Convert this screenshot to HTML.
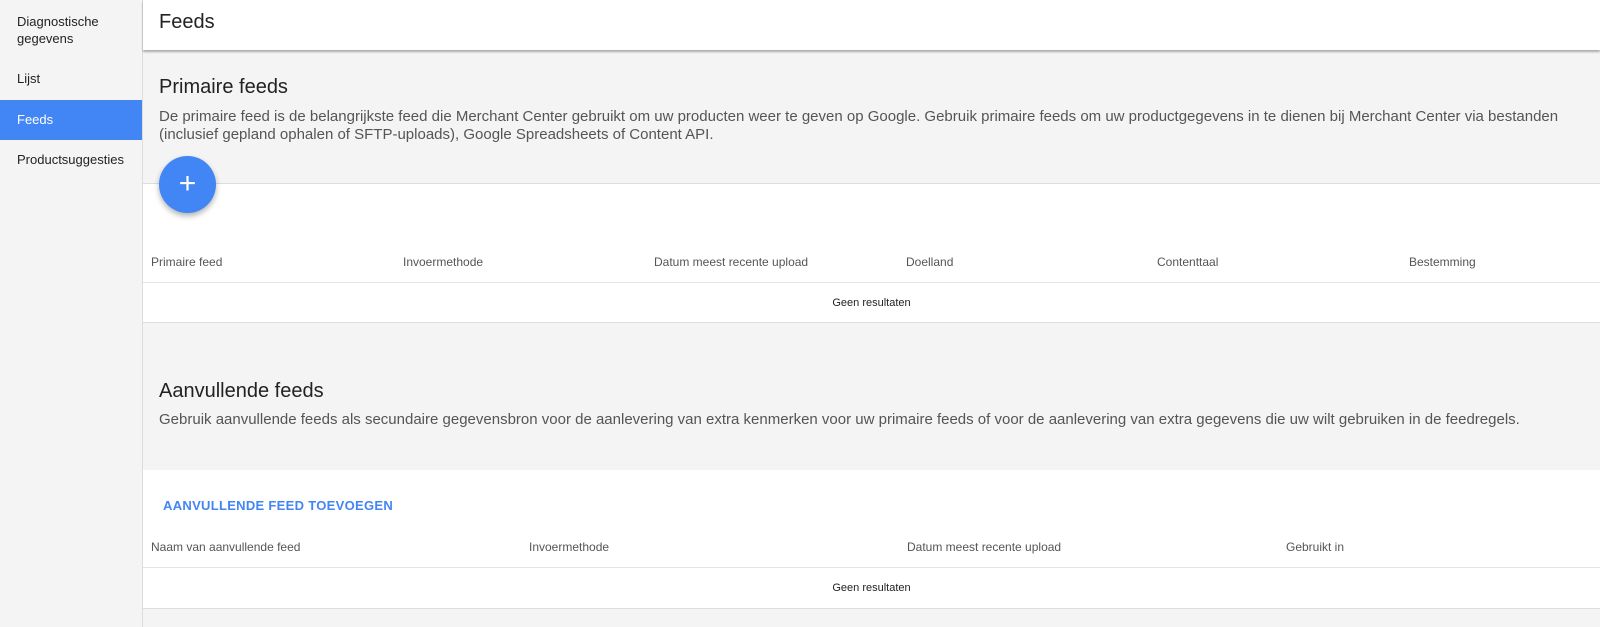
<!DOCTYPE html>
<html><head><style>
*{margin:0;padding:0;box-sizing:border-box}
body{width:1600px;height:627px;overflow:hidden;background:#f4f4f4;font-family:"Liberation Sans",sans-serif;position:relative}
.sb{position:absolute;left:0;top:0;width:143px;height:627px;background:#f4f4f4;border-right:1px solid #dcdcdc}
.sb .i{position:absolute;left:17px;font-size:13px;color:#222;line-height:17px}
.sb .act{position:absolute;left:0;top:100px;width:142px;height:40px;background:#4285f4}
.m{position:absolute;left:143px;right:0}
.t{position:absolute;font-size:12px;color:#555}
.c{position:absolute;font-size:11px;color:#222;width:100%;text-align:center}
</style></head><body>
<div class="sb">
<div class="i" style="top:13px">Diagnostische<br>gegevens</div>
<div class="i" style="top:70px">Lijst</div>
<div class="act"></div>
<div class="i" style="top:111px;color:#fff">Feeds</div>
<div class="i" style="top:151px">Productsuggesties</div>
</div>
<div class="m" style="top:0;height:50px;background:#fff;box-shadow:0 2px 2px rgba(0,0,0,.3)"><div style="position:absolute;left:16px;top:11px;font-size:20px;color:#222">Feeds</div></div>
<div class="m" style="top:52px;height:131px">
<div style="position:absolute;left:16px;top:24px;font-size:20px;color:#222">Primaire feeds</div>
<div style="position:absolute;left:16px;top:56px;font-size:15px;color:#555;line-height:18px;white-space:nowrap">De primaire feed is de belangrijkste feed die Merchant Center gebruikt om uw producten weer te geven op Google. Gebruik primaire feeds om uw productgegevens in te dienen bij Merchant Center via bestanden<br>(inclusief gepland ophalen of SFTP-uploads), Google Spreadsheets of Content API.</div>
</div>
<div class="m" style="top:183px;height:140px;background:#fff;border-top:1px solid #ddd;border-bottom:1px solid #ddd">
<div class="t" style="left:8px;top:71px">Primaire feed</div>
<div class="t" style="left:260px;top:71px">Invoermethode</div>
<div class="t" style="left:511px;top:71px">Datum meest recente upload</div>
<div class="t" style="left:763px;top:71px">Doelland</div>
<div class="t" style="left:1014px;top:71px">Contenttaal</div>
<div class="t" style="left:1266px;top:71px">Bestemming</div>
<div style="position:absolute;left:0;right:0;top:98px;border-top:1px solid #e4e4e4"></div>
<div class="c" style="top:113px">Geen resultaten</div>
</div>
<div style="position:absolute;left:159px;top:156px;width:57px;height:57px;border-radius:50%;background:#4285f4;box-shadow:0 3px 6px rgba(0,0,0,.3);color:#fff;font-size:30px;text-align:center;line-height:55px;font-weight:300">+</div>
<div class="m" style="top:323px;height:147px">
<div style="position:absolute;left:16px;top:57px;font-size:20px;color:#222">Aanvullende feeds</div>
<div style="position:absolute;left:16px;top:88px;font-size:15px;color:#555;white-space:nowrap">Gebruik aanvullende feeds als secundaire gegevensbron voor de aanlevering van extra kenmerken voor uw primaire feeds of voor de aanlevering van extra gegevens die uw wilt gebruiken in de feedregels.</div>
</div>
<div class="m" style="top:470px;height:139px;background:#fff;border-bottom:1px solid #ddd">
<div style="position:absolute;left:20px;top:28px;font-size:13px;color:#4285f4;font-weight:bold;letter-spacing:.3px">AANVULLENDE FEED TOEVOEGEN</div>
<div class="t" style="left:8px;top:70px">Naam van aanvullende feed</div>
<div class="t" style="left:386px;top:70px">Invoermethode</div>
<div class="t" style="left:764px;top:70px">Datum meest recente upload</div>
<div class="t" style="left:1143px;top:70px">Gebruikt in</div>
<div style="position:absolute;left:0;right:0;top:97px;border-top:1px solid #e4e4e4"></div>
<div class="c" style="top:112px">Geen resultaten</div>
</div>
</body></html>
